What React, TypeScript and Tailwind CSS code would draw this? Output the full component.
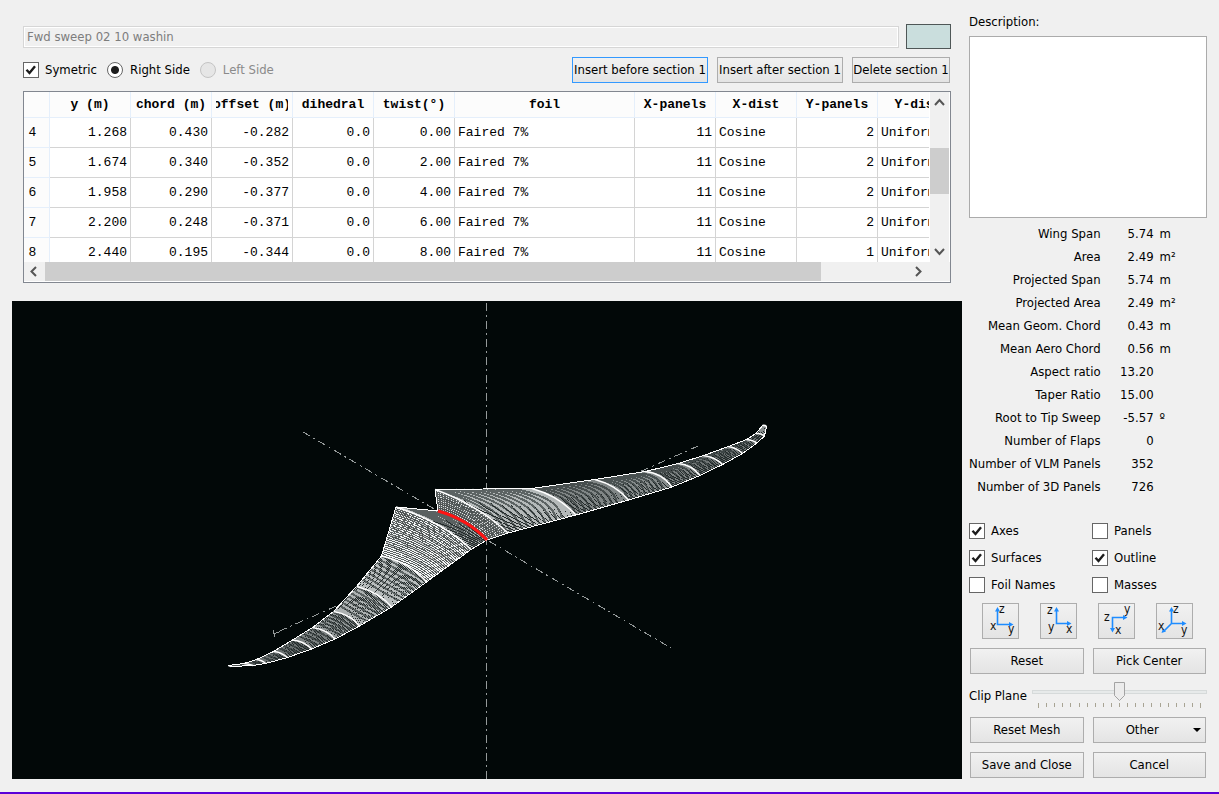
import React, { useState } from "react";

type Pt = [number, number];
type Section = { a: Pt; c: Pt; b: Pt };
type Mesh = { light: number; bands: number; tone: string; stipple?: boolean };

const HEADERS = ["y (m)", "chord (m)", "offset (m)", "dihedral", "twist(°)", "foil", "X-panels", "X-dist", "Y-panels", "Y-dist"];
const WIDTHS = [81, 81, 81, 81, 81, 180, 81, 81, 81, 81];
const ROWS = [
  ["4", "1.268", "0.430", "-0.282", "0.0", "0.00", "Faired 7%", "11", "Cosine", "2", "Uniform"],
  ["5", "1.674", "0.340", "-0.352", "0.0", "2.00", "Faired 7%", "11", "Cosine", "2", "Uniform"],
  ["6", "1.958", "0.290", "-0.377", "0.0", "4.00", "Faired 7%", "11", "Cosine", "2", "Uniform"],
  ["7", "2.200", "0.248", "-0.371", "0.0", "6.00", "Faired 7%", "11", "Cosine", "2", "Uniform"],
  ["8", "2.440", "0.195", "-0.344", "0.0", "8.00", "Faired 7%", "11", "Cosine", "1", "Uniform"],
];
const LEFT_ALIGNED = [6, 8, 10];

const STATS: [string, string, string][] = [
  ["Wing Span", "5.74", "m"],
  ["Area", "2.49", "m²"],
  ["Projected Span", "5.74", "m"],
  ["Projected Area", "2.49", "m²"],
  ["Mean Geom. Chord", "0.43", "m"],
  ["Mean Aero Chord", "0.56", "m"],
  ["Aspect ratio", "13.20", ""],
  ["Taper Ratio", "15.00", ""],
  ["Root to Tip Sweep", "-5.57", "º"],
  ["Number of Flaps", "0", ""],
  ["Number of VLM Panels", "352", ""],
  ["Number of 3D Panels", "726", ""],
];

const ROOT: Section = { a: [438, 511], c: [467, 519], b: [487, 540] };
const RIGHT: Section[] = [
  ROOT,
  { a: [435, 489.5], c: [478, 505], b: [508, 533] },
  { a: [532, 488.5], c: [559, 496], b: [576, 515] },
  { a: [595, 479.5], c: [616, 485], b: [628.5, 500] },
  { a: [645, 471.5], c: [662, 473], b: [672, 487] },
  { a: [678.5, 463.5], c: [692, 465], b: [700, 475.5] },
  { a: [703.5, 455.5], c: [715, 457], b: [722.5, 464.5] },
  { a: [728.5, 446.5], c: [737, 448], b: [742.5, 453.5] },
  { a: [746.5, 439.5], c: [753, 440], b: [757, 443] },
  { a: [756, 433.5], c: [761, 433], b: [764.5, 436] },
  { a: [762.5, 425.5], c: [765, 425], b: [766.5, 426.5] },
];
const LEFT: Section[] = [
  ROOT,
  { a: [396, 507], c: [445, 523], b: [471, 549.5] },
  { a: [381.5, 556], c: [409, 562], b: [426.5, 582] },
  { a: [356.5, 586.5], c: [379, 592], b: [391.5, 607] },
  { a: [333.5, 611.5], c: [350, 614], b: [359.5, 626] },
  { a: [312.5, 627.5], c: [328, 630], b: [335, 639] },
  { a: [292.5, 640], c: [304, 641], b: [311.5, 649] },
  { a: [273.5, 651.5], c: [281, 652], b: [287.5, 657.5] },
  { a: [256.5, 659.5], c: [262, 660], b: [265.5, 663.5] },
  { a: [244, 663.5], c: [249, 664], b: [253, 665.5] },
  { a: [228.5, 665.5], c: [229, 666], b: [231, 666.5] },
];

const RIGHT_MESH: Mesh[] = [
  { light: 30, bands: 3, tone: "#e2e5e5", stipple: true },
  { light: 42, bands: 11, tone: "#b4b9b9" },
  { light: 30, bands: 9, tone: "#808686" },
  { light: 24, bands: 9, tone: "#868c8c" },
  { light: 17, bands: 6, tone: "#7b8181" },
  { light: 13, bands: 4, tone: "#6f7575" },
  { light: 10, bands: 4, tone: "#6a7070" },
  { light: 7, bands: 3, tone: "#6a7070" },
  { light: 4, bands: 1, tone: "#6a7070" },
  { light: 5, bands: 0, tone: "#8a9090" },
];
const LEFT_MESH: Mesh[] = [
  { light: 36, bands: 6, tone: "#b0b5b5" },
  { light: 62, bands: 5, tone: "#f4f6f6", stipple: true },
  { light: 36, bands: 8, tone: "#b8bdbd" },
  { light: 26, bands: 7, tone: "#acb1b1" },
  { light: 19, bands: 6, tone: "#8f9595" },
  { light: 15, bands: 4, tone: "#7b8181" },
  { light: 11, bands: 4, tone: "#6a7070" },
  { light: 8, bands: 3, tone: "#6a7070" },
  { light: 5, bands: 1, tone: "#4c5252" },
  { light: 3, bands: 0, tone: "#4c5252" },
];

const mix = (p: Pt, q: Pt, t: number): Pt => [p[0] + (q[0] - p[0]) * t, p[1] + (q[1] - p[1]) * t];
const at = (s: Section, t: number): Pt => mix(mix(s.a, s.c, t), mix(s.c, s.b, t), t);
const curve = (s: Section) => `M${s.a} Q${s.c} ${s.b}`;
const outline = (p: Section, q: Section) => `M${p.a} Q${p.c} ${p.b} L${q.b} Q${q.c} ${q.a} Z`;

// Spanwise mesh lines from one section to the next.
function ribs(p: Section, q: Section, n: number) {
  let d = "";
  for (let i = 0; i <= n; i++) {
    d += `M${at(p, i / n)}L${at(q, i / n)}`;
  }
  return d;
}

// Chordwise shading bands, interpolated between the two sections and bowed toward the root.
function bands(p: Section, q: Section, n: number) {
  let d = "";
  for (let i = 1; i <= n; i++) {
    const t = i / (n + 1);
    const back = Math.max(0, t - 0.12);
    d += `M${mix(p.a, q.a, back)}Q${mix(p.c, q.c, t + 0.08)} ${mix(p.b, q.b, back)}`;
  }
  return d;
}

function Wing({ sections, mesh }: { sections: Section[]; mesh: Mesh[] }) {
  const order = mesh.map((_, i) => i).reverse();
  return (
    <g fill="none">
      {order.map((i) => {
        const p = sections[i];
        const q = sections[i + 1];
        const m = mesh[i];
        return (
          <g key={i} shapeRendering="crispEdges" strokeWidth="1">
            <path d={outline(p, q)} fill={m.stipple ? "#5a6060" : "#222929"} />
            <path d={ribs(p, q, m.light)} stroke={m.tone} strokeDasharray={m.stipple ? "1 1" : "none"} />
            <path d={bands(p, q, m.bands)} stroke="#222929" strokeOpacity={m.stipple ? 0.25 : 0.6} strokeWidth="2" />
            <path d={`M${p.a}L${q.a}M${p.b}L${q.b}`} stroke="#fff" />
          </g>
        );
      })}
      {sections.slice(1).map((s, i) => (
        <path key={i} d={curve(s)} stroke="#fff" strokeWidth="1.5" />
      ))}
    </g>
  );
}

function WingView() {
  return (
    <svg viewBox="12 301 950 478" className="block h-full w-full" role="img" aria-label="Wing 3D view">
      <g stroke="#959a9a" strokeWidth="1" strokeDasharray="8 4 2 4" fill="none" shapeRendering="crispEdges">
        <path d="M486.500 779V301" />
        <path d="M303 432L671 648" />
        <path d="M698 446L273 634" />
        <path d="M273 630L275 637M273 634L279 632" strokeDasharray="none" />
      </g>
      <Wing sections={RIGHT} mesh={RIGHT_MESH} />
      <Wing sections={LEFT} mesh={LEFT_MESH} />
      <path d={curve(ROOT)} stroke="#ff1414" strokeWidth="3" fill="none" />
    </svg>
  );
}

function Check({ label, on = false }: { label: string; on?: boolean }) {
  const [checked, setChecked] = useState(on);
  return (
    <label className="flex items-center gap-1.5">
      <span className="relative size-4 shrink-0">
        <input
          type="checkbox"
          checked={checked}
          onChange={() => setChecked(!checked)}
          className="block size-4 appearance-none border border-[#666] bg-white"
        />
        {checked && (
          <svg viewBox="0 0 16 16" className="pointer-events-none absolute inset-0 size-4">
            <path d="M3.500 7.800L6.500 11L12 4.300" fill="none" stroke="#1c1c1c" strokeWidth="2.4" />
          </svg>
        )}
      </span>
      {label}
    </label>
  );
}

function Side({ label, checked = false, disabled = false }: { label: string; checked?: boolean; disabled?: boolean }) {
  return (
    <label className={disabled ? "flex items-center gap-[7px] text-[#8a8a8a]" : "flex items-center gap-[7px]"}>
      <input
        type="radio"
        name="side"
        defaultChecked={checked}
        disabled={disabled}
        className="size-4 appearance-none rounded-full border border-[#666] bg-white checked:bg-[radial-gradient(circle,#1c1c1c_3.5px,#fff_4.5px)] disabled:border-[#c4c4c4] disabled:bg-[#e6e6e6]"
      />
      {label}
    </label>
  );
}

const BUTTON = "h-[26px] border border-[#adadad] bg-linear-to-b from-[#f1f1f1] to-[#e4e4e4] whitespace-nowrap";

function Arrow({ d }: { d: string }) {
  return (
    <svg viewBox="0 0 19 19" className="size-[19px]">
      <path d={d} fill="none" stroke="#555" strokeWidth="2" />
    </svg>
  );
}

function SectionTable() {
  return (
    <div className="flex h-48 flex-col border border-[#828790] bg-white">
      <div className="flex min-h-0 flex-1">
        <div className="min-w-0 flex-1 overflow-hidden border-r border-white font-['Liberation_Mono',monospace] text-[13px]">
          <table className="w-[935px] table-fixed border-separate border-spacing-0">
            <colgroup>
              <col className="w-[26px]" />
              {WIDTHS.map((w, i) => (
                <col key={i} style={{ width: w }} />
              ))}
            </colgroup>
            <thead>
              <tr className="h-[26px] bg-[#fcfcfc]">
                <td className="border-r border-b border-[#e5effb] p-0" />
                {HEADERS.map((h) => (
                  <th key={h} scope="col" className="border-r border-b border-[#e5effb] px-1 py-0 leading-4 font-bold">
                    <span className="flex justify-center overflow-hidden whitespace-nowrap">{h}</span>
                  </th>
                ))}
              </tr>
            </thead>
            <tbody>
              {ROWS.map((r) => (
                <tr key={r[0]} className="h-[30px]">
                  {r.map((c, i) =>
                    i === 0 ? (
                      <th key={i} scope="row" className="border-r border-b border-[#e5effb] bg-[#fcfcfc] p-0 pr-2 text-center font-normal">
                        {c}
                      </th>
                    ) : (
                      <td
                        key={i}
                        className={
                          LEFT_ALIGNED.includes(i)
                            ? "border-r border-b border-[#d4d4d4] px-[3px] py-0 text-left"
                            : "border-r border-b border-[#d4d4d4] px-[3px] py-0 text-right"
                        }
                      >
                        {c}
                      </td>
                    )
                  )}
                </tr>
              ))}
            </tbody>
          </table>
        </div>
        <div className="flex w-[19px] flex-col bg-[#f0f0f0]">
          <Arrow d="M5 13L9.500 8L14 13" />
          <div className="mt-[37px] mb-auto h-[46px] bg-[#cdcdcd]" />
          <Arrow d="M5 6L9.500 11L14 6" />
        </div>
        <div className="w-px" />
      </div>
      <div className="flex h-5 justify-between border-b border-white bg-[#f0f0f0]">
        <div className="flex flex-1">
          <div className="w-[21px]">
            <Arrow d="M12 5L7.500 9.500L12 14" />
          </div>
          <div className="w-[87.7%] bg-[#cdcdcd]" />
        </div>
        <div className="mr-[22px]">
          <Arrow d="M7 5L11.500 9.500L7 14" />
        </div>
      </div>
    </div>
  );
}

type Glyph = { t: string; x: number; y: number };

const VIEWS: { name: string; d: string; heads: string; glyphs: Glyph[] }[] = [
  {
    name: "Front view",
    d: "M15.500 7V21.500H28",
    heads: "M13 8.500L15.500 4L18 8.500ZM27 19L31.500 21.500L27 24Z",
    glyphs: [{ t: "z", x: 17, y: 10 }, { t: "x", x: 8, y: 27 }, { t: "y", x: 26, y: 30 }],
  },
  {
    name: "Side view",
    d: "M16.500 7V20.500H28",
    heads: "M14 8.500L16.500 4L19 8.500ZM27 18L31.500 20.500L27 23Z",
    glyphs: [{ t: "z", x: 7, y: 11 }, { t: "y", x: 8, y: 28 }, { t: "x", x: 26, y: 30 }],
  },
  {
    name: "Top view",
    d: "M14.500 26V14.500H26",
    heads: "M12 25L14.500 29.500L17 25ZM25 12L29.500 14.500L25 17Z",
    glyphs: [{ t: "z", x: 6, y: 18 }, { t: "x", x: 17, y: 31 }, { t: "y", x: 26, y: 10 }],
  },
  {
    name: "Isometric view",
    d: "M15.500 7V20.500H27M15.500 20.500L8 28",
    heads: "M13 8.500L15.500 4L18 8.500ZM26 18L30.500 20.500L26 23ZM5.500 30L7 25.500L10 28.500Z",
    glyphs: [{ t: "z", x: 17, y: 10 }, { t: "x", x: 2, y: 27 }, { t: "y", x: 25, y: 31 }],
  },
];

function SidePanel() {
  const [clip, setClip] = useState(50);
  return (
    <aside className="flex w-[238px] shrink-0 flex-col">
      <label htmlFor="description" className="mt-3 h-6 leading-5">
        Description:
      </label>
      <textarea id="description" className="block h-[182px] resize-none border border-[#ababab] bg-white p-1" />

      <table className="mt-1 w-full border-separate border-spacing-0">
        <tbody>
          {STATS.map(([k, v, u]) => (
            <tr key={k} className="h-[23px]">
              <th scope="row" className="w-[130px] p-0 text-right font-normal whitespace-nowrap">{k}</th>
              <td className="w-[53px] p-0 text-right">{v}</td>
              <td className="p-0 pl-1.5">{u}</td>
            </tr>
          ))}
        </tbody>
      </table>

      <div className="mt-[25px] grid grid-cols-[123px_1fr] gap-y-[11px] leading-4">
        <Check label="Axes" on />
        <Check label="Panels" />
        <Check label="Surfaces" on />
        <Check label="Outline" on />
        <Check label="Foil Names" />
        <Check label="Masses" />
      </div>

      <div className="mt-[10px] flex justify-around pr-1 pl-0.5">
        {VIEWS.map((v) => (
          <button key={v.name} type="button" aria-label={v.name} className="h-9 w-[37px] border border-[#adadad] bg-linear-to-b from-[#f1f1f1] to-[#e4e4e4]">
            <svg viewBox="1 1 35 34" className="block h-[34px] w-[35px]">
              <path d={v.d} fill="none" stroke="#1e8cff" strokeWidth="1.6" />
              <path d={v.heads} fill="#1e8cff" />
              {v.glyphs.map((g) => (
                <text key={g.t} x={g.x} y={g.y} fontSize="12" fill="#111">{g.t}</text>
              ))}
            </svg>
          </button>
        ))}
      </div>

      <div className="mt-[9px] grid grid-cols-2 gap-[9px] px-px">
        <button type="button" className={BUTTON}>Reset</button>
        <button type="button" className={BUTTON}>Pick Center</button>
      </div>

      <div className="my-[7px] flex h-[29px] items-center justify-between">
        <label htmlFor="clip">Clip Plane</label>
        <div className="relative h-[29px] w-[175px]">
          <svg viewBox="0 0 175 29" className="block h-[29px] w-[175px]" shapeRendering="crispEdges">
            <rect x="0.500" y="9.500" width="174" height="3" fill="#e7eaea" stroke="#d6dada" />
            {Array.from({ length: 21 }, (_, i) => (
              <rect key={i} x={6 + Math.round(i * 8.1)} y="22" width="1" height={i % 20 ? 4 : 5} fill="#a8a494" />
            ))}
            <g transform={`translate(${Math.round((clip - 50) * 1.62)} 0)`}>
              <path d="M82.500 1.500H92.500V14.500L87.500 19.500L82.500 14.500Z" fill="#ececec" stroke="#a3a3a3" shapeRendering="auto" />
            </g>
          </svg>
          <input
            id="clip"
            type="range"
            value={clip}
            onChange={(e) => setClip(Number(e.target.value))}
            className="absolute inset-0 h-full w-full opacity-0"
          />
        </div>
      </div>

      <div className="grid grid-cols-2 gap-[9px] px-px">
        <button type="button" className={BUTTON}>Reset Mesh</button>
        <button type="button" aria-haspopup="menu" className="flex h-[26px] items-center border border-[#adadad] bg-linear-to-b from-[#f1f1f1] to-[#e4e4e4] px-1">
          <span className="flex-1 pr-1.5 text-center">Other</span>
          <svg viewBox="0 0 8 4" className="h-1 w-2"><path d="M0 0H8L4 4Z" fill="#000" /></svg>
        </button>
        <button type="button" className={BUTTON}>Save and Close</button>
        <button type="button" className={BUTTON}>Cancel</button>
      </div>
    </aside>
  );
}

export default function App() {
  return (
    <div className="flex min-h-screen gap-[7px] border-b-2 border-[#5a00d8] bg-[#f0f0f0] pr-3 pb-[13px] pl-3 font-['DejaVu_Sans_Condensed','Noto_Sans',sans-serif] text-[13px] leading-4 text-black">
      <main className="flex min-w-0 flex-1 flex-col">
        <div className="pt-6 pr-[11px] pl-[11px]">
          <div className="flex items-center gap-[7px]">
            <input
              aria-label="Wing name"
              disabled
              defaultValue="Fwd sweep 02 10 washin"
              className="h-[22px] min-w-0 flex-1 border border-[#d6d6d6] bg-[#f0f0f0] px-[3px] text-[#7d7d7d] outline-1 -outline-offset-2 outline-white"
            />
            <button type="button" aria-label="Wing color" className="h-[25px] w-[45px] border border-[#4f5757] bg-[#cadedd]" />
          </div>
          <div className="mt-2 flex h-[26px] items-center">
            <Check label="Symetric" on />
            <div className="ml-[10px] flex gap-[10px]">
              <Side label="Right Side" checked />
              <Side label="Left Side" disabled />
            </div>
            <div className="ml-auto flex gap-[9px] pr-px">
              <button type="button" className="h-[26px] w-[136px] border border-[#3399ff] bg-linear-to-b from-[#f1f1f1] to-[#e4e4e4] whitespace-nowrap">Insert before section 1</button>
              <button type="button" className={BUTTON + " w-[126px]"}>Insert after section 1</button>
              <button type="button" className={BUTTON + " w-[98px]"}>Delete section 1</button>
            </div>
          </div>
          <div className="mt-2">
            <SectionTable />
          </div>
        </div>
        <div className="mt-[18px] min-h-0 flex-1 basis-0 bg-[#020808]">
          <WingView />
        </div>
      </main>
      <SidePanel />
    </div>
  );
}
